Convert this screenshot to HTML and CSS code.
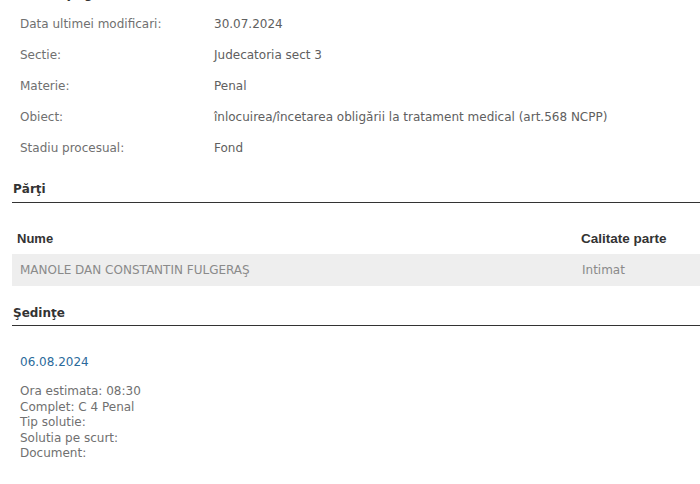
FILE: index.html
```html
<!DOCTYPE html>
<html lang="ro">
<head>
<meta charset="utf-8">
<link rel="stylesheet" href="styles.css">
<title>Dosar</title>
</head>
<body>
<div class="page">
  <div class="cut-heading">Informaţii generale</div>
  <div class="info">
    <div class="info-row"><span class="label">Data ultimei modificari:</span><span class="value">30.07.2024</span></div>
    <div class="info-row"><span class="label">Sectie:</span><span class="value">Judecatoria sect 3</span></div>
    <div class="info-row"><span class="label">Materie:</span><span class="value">Penal</span></div>
    <div class="info-row"><span class="label">Obiect:</span><span class="value">înlocuirea/încetarea obligării la tratament medical (art.568 NCPP)</span></div>
    <div class="info-row"><span class="label">Stadiu procesual:</span><span class="value">Fond</span></div>
  </div>

  <h2 class="section-title parti">Părţi</h2>
  <div class="table">
    <div class="t-head">
      <span class="th th-name">Nume</span>
      <span class="th">Calitate parte</span>
    </div>
    <div class="t-row">
      <span class="td td-name">MANOLE DAN CONSTANTIN FULGERAŞ</span>
      <span class="td">Intimat</span>
    </div>
  </div>

  <h2 class="section-title sedinte">Şedinţe</h2>
  <div class="session">
    <div class="session-date">06.08.2024</div>
    <div class="session-details">
      <div>Ora estimata: 08:30</div>
      <div>Complet: C 4 Penal</div>
      <div>Tip solutie:</div>
      <div>Solutia pe scurt:</div>
      <div>Document:</div>
    </div>
  </div>
</div>
</body>
</html>
```

FILE: styles.css
```css
html, body {
  margin: 0;
  padding: 0;
  background: #ffffff;
}

body {
  font-family: "DejaVu Sans", Verdana, sans-serif;
  font-size: 12px;
  color: #666;
  overflow: hidden;
}

.page {
  padding-left: 12px;
}

.cut-heading {
  font-weight: bold;
  color: #333;
  line-height: 16px;
  margin-top: -14px;
  height: 4px;
  overflow: visible;
  padding-left: 1px;
}

.info {
  margin-top: 18.5px;
}

.info-row {
  display: flex;
  line-height: 31px;
  padding-left: 8px;
  white-space: nowrap;
}

.label {
  width: 194px;
  flex: none;
  color: #707070;
}

.value {
  color: #606060;
}

.section-title {
  margin: 0;
  font-size: 12px;
  font-weight: bold;
  color: #333;
  line-height: 16px;
  padding-left: 1px;
  border-bottom: 1px solid #333;
}

.parti {
  margin-top: 17.5px;
  padding-bottom: 5px;
}

.sedinte {
  margin-top: 19px;
  padding-bottom: 4px;
}

.table {
  margin-top: 19px;
}

.t-head,
.t-row {
  display: grid;
  grid-template-columns: 563px 1fr;
  height: 32px;
  align-items: center;
}

.t-row {
  background: #eeeeee;
}

.th {
  font-family: "Liberation Sans", Arial, sans-serif;
  font-size: 13px;
  font-weight: bold;
  color: #333;
  padding-left: 6px;
}

.th-name {
  padding-left: 5px;
}

.th + .th {
  font-size: 13.5px;
}

.td {
  color: #8a8a8a;
  padding-left: 7px;
}

.td-name {
  padding-left: 8px;
}

.session {
  padding-left: 8px;
  margin-top: 28px;
}

.session-date {
  color: #2b6a9b;
  line-height: 16px;
}

.session-details {
  margin-top: 14px;
  line-height: 15.5px;
  color: #707070;
}
```
